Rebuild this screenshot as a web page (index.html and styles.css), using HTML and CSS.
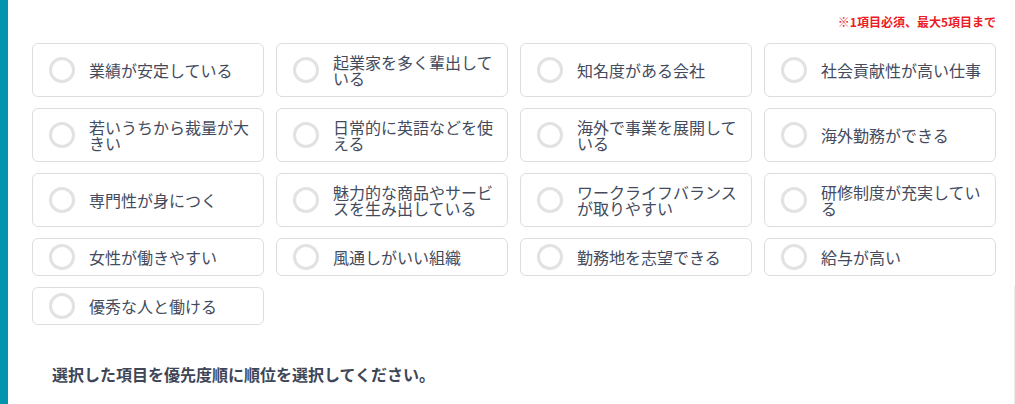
FILE: index.html
```html
<!DOCTYPE html>
<html lang="ja">
<head>
<meta charset="utf-8">
<link rel="stylesheet" href="styles.css">
</head>
<body>
<div class="page">
  <div class="side-bar"></div>
  <main class="content">
    <p class="note">※1項目必須、最大5項目まで</p>
    <div class="options">
      <label class="option"><span class="radio"></span><span class="label">業績が安定している</span></label>
      <label class="option"><span class="radio"></span><span class="label">起業家を多く輩出している</span></label>
      <label class="option"><span class="radio"></span><span class="label">知名度がある会社</span></label>
      <label class="option"><span class="radio"></span><span class="label">社会貢献性が高い仕事</span></label>
      <label class="option"><span class="radio"></span><span class="label">若いうちから裁量が大きい</span></label>
      <label class="option"><span class="radio"></span><span class="label">日常的に英語などを使える</span></label>
      <label class="option"><span class="radio"></span><span class="label">海外で事業を展開している</span></label>
      <label class="option"><span class="radio"></span><span class="label">海外勤務ができる</span></label>
      <label class="option"><span class="radio"></span><span class="label">専門性が身につく</span></label>
      <label class="option"><span class="radio"></span><span class="label">魅力的な商品やサービスを生み出している</span></label>
      <label class="option"><span class="radio"></span><span class="label">ワークライフバランスが取りやすい</span></label>
      <label class="option"><span class="radio"></span><span class="label">研修制度が充実している</span></label>
      <label class="option"><span class="radio"></span><span class="label">女性が働きやすい</span></label>
      <label class="option"><span class="radio"></span><span class="label">風通しがいい組織</span></label>
      <label class="option"><span class="radio"></span><span class="label">勤務地を志望できる</span></label>
      <label class="option"><span class="radio"></span><span class="label">給与が高い</span></label>
      <label class="option"><span class="radio"></span><span class="label">優秀な人と働ける</span></label>
    </div>
    <h3 class="heading">選択した項目を優先度順に順位を選択してください。</h3>
  </main>
  <div class="edge-line"></div>
</div>
</body>
</html>
```
FILE: styles.css
```css
* { box-sizing: border-box; }
html, body {
  margin: 0;
  padding: 0;
  background: #ffffff;
  font-family: "Noto Sans CJK JP", "Noto Sans", sans-serif;
  color: #414a5b;
}
.page {
  display: flex;
  min-height: 404px;
  position: relative;
}
.side-bar {
  width: 8px;
  flex: 0 0 8px;
  background: #0095ac;
}
.content {
  width: 988px;
  padding: 14px 0 0 24px;
}
.note {
  margin: 0;
  text-align: right;
  font-size: 12px;
  line-height: 16px;
  font-weight: bold;
  color: #ec1c24;
}
.options {
  margin-top: 13px;
  display: grid;
  grid-template-columns: repeat(4, 232px);
  column-gap: 12px;
  row-gap: 11px;
}
.option {
  display: flex;
  align-items: center;
  border: 1px solid #dddddd;
  border-radius: 6px;
  padding: 5px 10px 5px 16px;
  background: #fff;
}
.radio {
  flex: 0 0 26px;
  width: 26px;
  height: 26px;
  border: 3px solid #e2e2e2;
  border-radius: 50%;
  margin-right: 14px;
}
.label {
  font-size: 16px;
  line-height: 16px;
  padding: 5px 0;
  max-width: 164px;
  color: #434b5d;
}
.heading {
  margin: 37px 0 0 20px;
  font-size: 16px;
  line-height: 24px;
  font-weight: bold;
  color: #3e4658;
}
.edge-line {
  position: absolute;
  right: 0;
  top: 286px;
  bottom: 0;
  width: 1px;
  background: #ececec;
}
```
